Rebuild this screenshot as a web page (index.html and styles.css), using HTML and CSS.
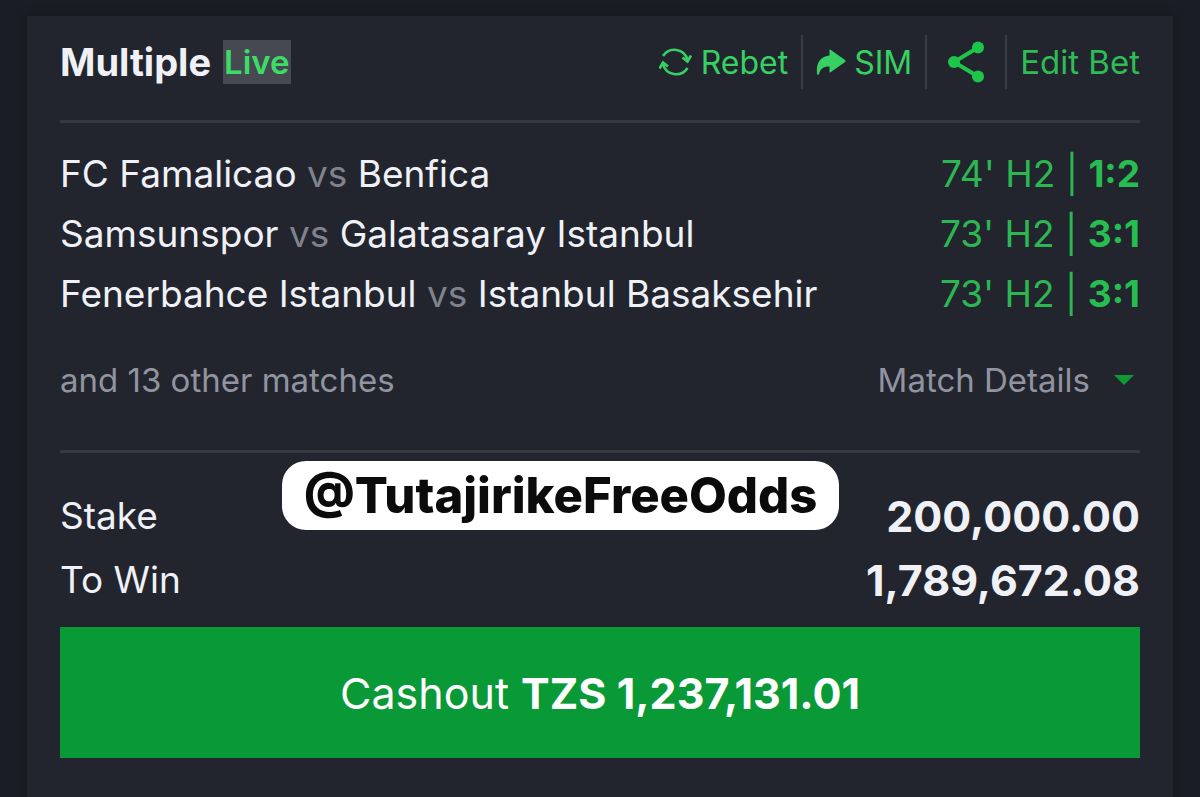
FILE: index.html
```html
<!DOCTYPE html>
<html lang="en">
<head>
    <meta charset="UTF-8">
    <meta name="viewport" content="width=device-width, initial-scale=1.0">
    <title>Multiple Live Bet</title>
    <link rel="stylesheet" href="styles.css">
</head>
<body>
    <main class="bet-card">
        <header class="bet-header">
            <h1>Multiple</h1>
            <span class="live">Live</span>
            <div class="actions">
                <button class="action" type="button">
                    <svg class="icon-rebet" viewBox="0 0 34 32" fill="none" stroke="currentColor" stroke-width="2.6" aria-hidden="true">
                        <path d="M4 10A13.500 13.500 0 0 1 28.500 14"/>
                        <path d="M28.500 22A13.500 13.500 0 0 1 4 18"/>
                        <path d="M23.500 11.500L28.500 15.500L32 9.500M9 20.500L4 16.500L.5 22.500"/>
                    </svg>
                    Rebet
                </button>
                <button class="action" type="button">
                    <svg class="icon-sim" viewBox="0 0 30 26" fill="currentColor" aria-hidden="true">
                        <path d="M13.5 1.2Q13.5 0 14.6 .8L29 11Q30 12 29 13L14.6 23.2Q13.5 24 13.5 22.8V17.6C8 17.3 4.500 19.500 3 25.200Q1.500 26.500 1 24.800C-.2 14 4.500 7.500 13.500 6.600Z"/>
                    </svg>
                    SIM
                </button>
                <button class="action share" type="button" aria-label="Share">
                    <svg class="icon-share" viewBox="0 0 38 42" fill="currentColor" aria-hidden="true">
                        <path d="M31 6.500L7 21L31 35.500" fill="none" stroke="currentColor" stroke-width="4"/>
                        <circle cx="31" cy="6.500" r="6"/>
                        <circle cx="7" cy="21" r="6"/>
                        <circle cx="31" cy="35.500" r="6"/>
                    </svg>
                </button>
                <button class="action edit" type="button">Edit Bet</button>
            </div>
        </header>

        <section class="matches">
            <ul>
                <li>
                    <span>FC Famalicao <span class="vs">vs</span> Benfica</span>
                    <span class="score">74' H2 | <b>1:2</b></span>
                </li>
                <li>
                    <span>Samsunspor <span class="vs">vs</span> Galatasaray Istanbul</span>
                    <span class="score">73' H2 | <b>3:1</b></span>
                </li>
                <li>
                    <span>Fenerbahce Istanbul <span class="vs">vs</span> Istanbul Basaksehir</span>
                    <span class="score">73' H2 | <b>3:1</b></span>
                </li>
            </ul>
            <div class="more">
                <span>and 13 other matches</span>
                <button class="details" type="button">Match Details <span class="arrow"></span></button>
            </div>
        </section>

        <section class="totals">
            <dl>
                <div class="total">
                    <dt>Stake</dt>
                    <dd>200,000.00</dd>
                </div>
                <div class="total">
                    <dt>To Win</dt>
                    <dd>1,789,672.08</dd>
                </div>
            </dl>
            <div class="handle">@TutajirikeFreeOdds</div>
        </section>

        <button class="cashout" type="button">Cashout <b>TZS 1,237,131.01</b></button>
    </main>
</body>
</html>
```

FILE: styles.css
```css
* {
    box-sizing: border-box;
}

body {
    background-color: #1a1d25;
    font-family: Inter, "Liberation Sans", sans-serif;
    color: #eff1f6;
    margin: 0;
    padding: 16px 27px 0;
    min-height: 100vh;
    display: flex;
}

button {
    background: none;
    border: 0;
    padding: 0;
    margin: 0;
    font-family: inherit;
    cursor: pointer;
}

.bet-card {
    background-color: #22252e;
    box-shadow: 0 0 10px rgba(0, 0, 0, 0.25);
    flex: 1;
    padding: 0 33px 39px;
}

.bet-header {
    display: flex;
    align-items: center;
    height: 107px;
    padding-bottom: 12px;
    border-bottom: 3px solid #363942;
}

h1 {
    font-size: 38px;
    font-weight: 700;
    line-height: 44px;
    margin: 0 12px 0 0;
}

.live {
    background-color: #464951;
    color: #3ddc66;
    font-size: 33px;
    font-weight: 600;
    line-height: 44px;
    padding: 0 1px;
}

.actions {
    display: flex;
    margin-left: auto;
}

.action {
    display: flex;
    align-items: center;
    height: 54px;
    gap: 8px;
    padding: 0 13px;
    border-right: 2px solid #383b44;
    color: #36d162;
    font-size: 32px;
}

.share {
    padding: 0 20px;
    color: #1dc648;
}

.edit {
    border-right: 0;
    padding-right: 0;
    color: #2ebd55;
    font-size: 33px;
}

.icon-rebet {
    width: 34px;
    height: 32px;
}

.icon-sim {
    width: 30px;
    height: 26px;
}

.icon-share {
    width: 38px;
    height: 42px;
}

.matches {
    border-bottom: 3px solid #363942;
    padding: 21px 0 40px;
}

ul {
    list-style: none;
    margin: 0;
    padding: 0;
}

li {
    display: flex;
    justify-content: space-between;
    font-size: 37px;
    line-height: 60px;
}

.vs {
    color: #80838e;
}

.score {
    color: #2cb752;
}

.score b {
    color: #27bd50;
}

.more {
    display: flex;
    justify-content: space-between;
    align-items: center;
    margin-top: 26px;
    color: #9194a0;
    font-size: 33px;
    line-height: 60px;
}

.details {
    display: flex;
    align-items: center;
    gap: 24px;
    padding-right: 6px;
    color: inherit;
    font-size: 33px;
}

.arrow {
    border: 10px solid transparent;
    border-top-color: #0b9a36;
    border-bottom: 0;
}

.totals {
    position: relative;
    padding: 31px 0 15px;
}

dl {
    margin: 0;
}

.total {
    display: flex;
    justify-content: space-between;
    font-size: 37px;
    line-height: 64px;
}

dd {
    margin: 0;
    font-size: 43px;
    font-weight: 700;
}

/* label laid over the totals */
.handle {
    position: absolute;
    top: 8px;
    left: 222px;
    padding: 0 22px;
    border-radius: 24px;
    background-color: #fff;
    color: #0b0b0c;
    font-size: 49px;
    font-weight: 800;
    line-height: 69px;
}

.cashout {
    display: block;
    width: 100%;
    height: 131px;
    background-color: #099a37;
    color: #fff;
    font-size: 43px;
}
```
